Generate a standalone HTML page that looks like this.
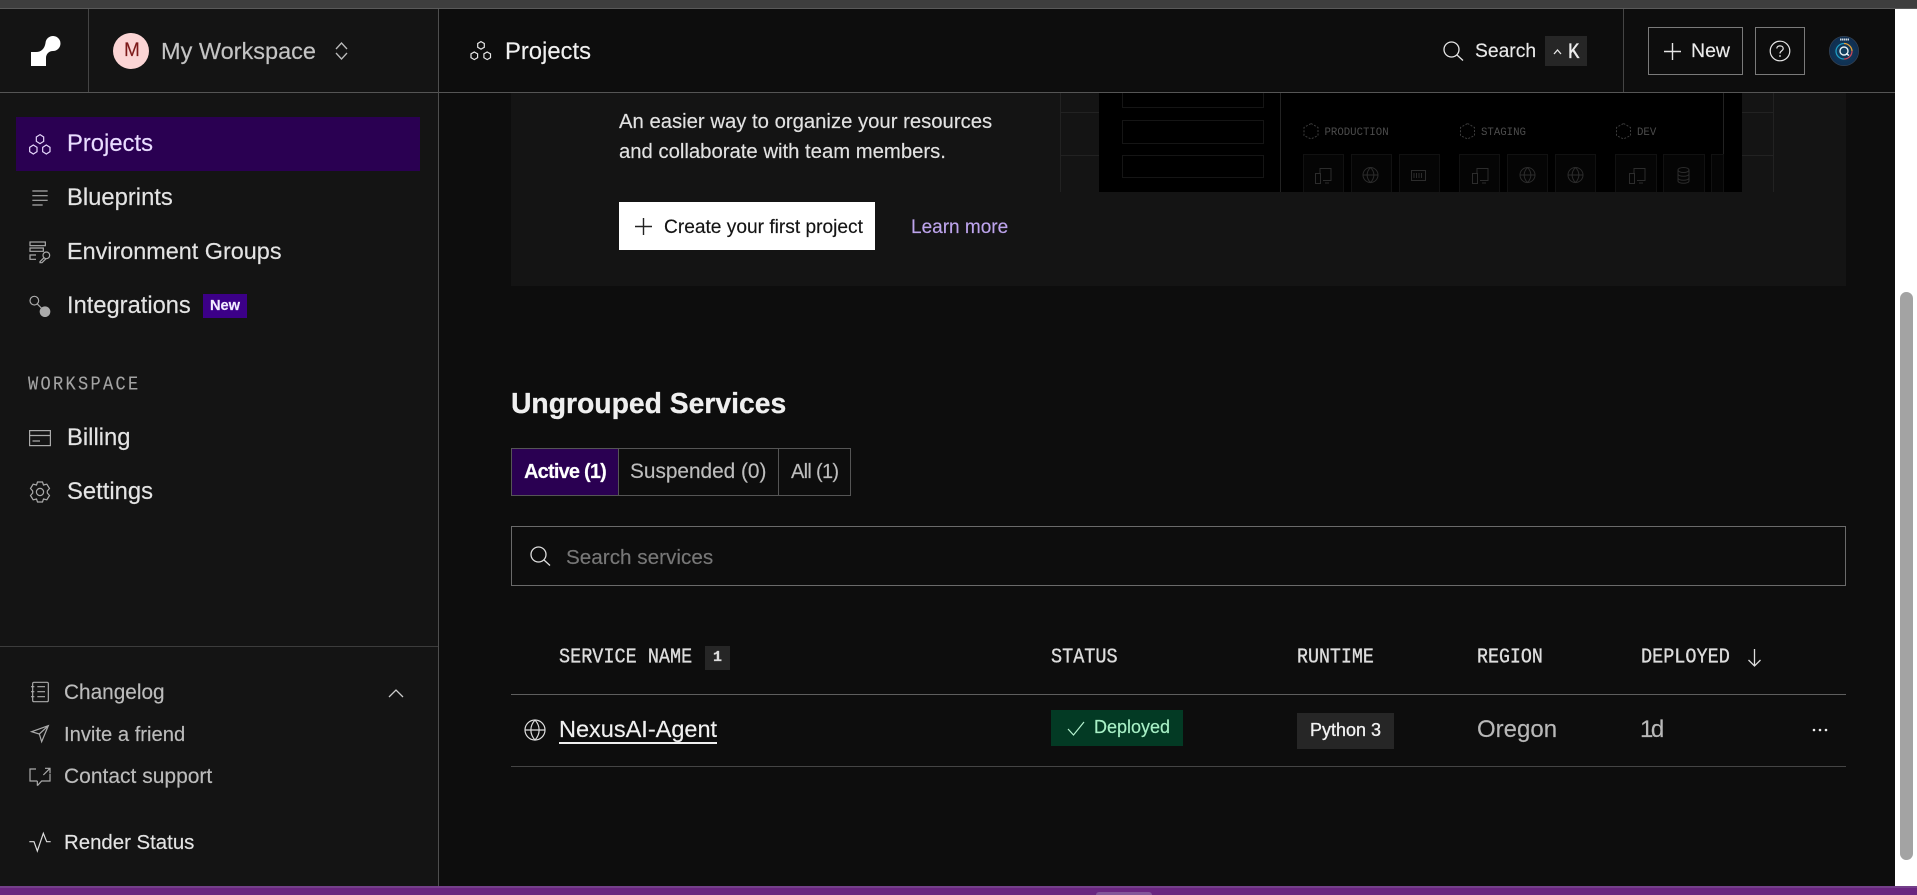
<!DOCTYPE html>
<html lang="en"><head><meta charset="utf-8"><title>Render Dashboard</title>
<style>
html,body{margin:0;padding:0;width:1917px;height:895px;overflow:hidden;background:#fff;font-family:"Liberation Sans",sans-serif}
.a{position:absolute}
.t{position:absolute;white-space:nowrap;line-height:0;height:0;-webkit-text-stroke:.15px currentColor}
.m{font-family:"Liberation Mono",monospace;transform:scaleY(1.16);transform-origin:0 0;-webkit-text-stroke:.3px currentColor}
svg{position:absolute;overflow:visible;fill:none}
a{color:inherit;text-decoration:none}
</style></head>
<body>
<!-- backgrounds -->
<div class="a" style="left:0;top:0;width:1917px;height:8px;background:#3e3e3e"></div>
<div class="a" style="left:0;top:8px;width:1917px;height:1px;background:#5a5a5a"></div>
<div class="a" style="left:0;top:9px;width:438px;height:877px;background:#141414"></div>
<div class="a" style="left:439px;top:9px;width:1456px;height:877px;background:#0d0d0d"></div>
<div class="a" style="left:1900px;top:292px;width:13px;height:568px;background:#a3a3a3;border-radius:7px"></div>
<div class="a" style="left:0;top:886px;width:1917px;height:9px;background:#6a2580"></div>
<div class="a" style="left:0;top:886px;width:1917px;height:2px;background:#74408a"></div>
<div class="a" style="left:1096px;top:892px;width:56px;height:3px;background:#84559a;border-radius:3px 3px 0 0"></div>

<!-- card -->
<div class="a" style="left:511px;top:93px;width:1335px;height:193px;background:#141414"></div>
<svg style="left:0;top:0" width="1917" height="895" viewBox="0 0 1917 895">
  <g stroke="#222" stroke-width="1">
    <path d="M1060.5 93V192M1773.5 93V192M1060 112.500H1099M1060 155.500H1099M1742 112.500H1773M1742 155.500H1773"/>
  </g>
  <rect x="1099" y="93" width="643" height="99" fill="#000"/>
  <g stroke="#151515">
    <path d="M1122.500 93V107.500H1263.500V93"/>
    <rect x="1122.500" y="120.500" width="141" height="23"/>
    <rect x="1122.500" y="155.500" width="141" height="22"/>
  </g>
  <path d="M1280.500 93V192M1723.500 93V192" stroke="#222"/>
  <g fill="#050505" stroke="#111">
    <rect x="1303.500" y="154.500" width="40" height="50"/><rect x="1351.500" y="154.500" width="40" height="50"/><rect x="1399.500" y="154.500" width="40" height="50"/>
    <rect x="1459.500" y="154.500" width="40" height="50"/><rect x="1507.500" y="154.500" width="40" height="50"/><rect x="1555.500" y="154.500" width="40" height="50"/>
    <rect x="1615.500" y="154.500" width="41" height="50"/><rect x="1663.500" y="154.500" width="41" height="50"/><rect x="1711.500" y="154.500" width="12" height="50"/>
  </g>
  <g stroke="#3c3c3c" stroke-dasharray="2 1.500">
    <path d="M1311 123.500L1318 127.500V135.500L1311 139L1304 135.500V127.500Z"/>
    <path d="M1467.500 123.500L1474.500 127.500V135.500L1467.500 139L1460.500 135.500V127.500Z"/>
    <path d="M1623.500 123.500L1630.500 127.500V135.500L1623.500 139L1616.500 135.500V127.500Z"/>
  </g>
  <g font-family="Liberation Mono, monospace" font-size="10.700" fill="#4c4c4c">
    <text x="1324.500" y="135">PRODUCTION</text><text x="1481" y="135">STAGING</text><text x="1637" y="135">DEV</text>
  </g>
  <g stroke="#2c2c2c" stroke-width="1">
    <path d="M1320 174V168.500H1331V180.500H1323M1325 183H1329"/><rect x="1315.500" y="173.500" width="5" height="10"/>
    <circle cx="1370.500" cy="175" r="7.500"/><path d="M1363 175H1378M1370.500 167.500C1366 172 1366 178 1370.500 182.500C1375 178 1375 172 1370.500 167.500"/>
    <rect x="1411.500" y="170.500" width="14" height="10"/><path d="M1414 173V178M1416.500 173V178M1419 173V178M1421.500 173V178" />
    <path d="M1477 174V168.500H1488V180.500H1480M1482 183H1486"/><rect x="1472.500" y="173.500" width="5" height="10"/>
    <circle cx="1527.500" cy="175" r="7.500"/><path d="M1520 175H1535M1527.500 167.500C1523 172 1523 178 1527.500 182.500C1532 178 1532 172 1527.500 167.500"/>
    <circle cx="1575.500" cy="175" r="7.500"/><path d="M1568 175H1583M1575.500 167.500C1571 172 1571 178 1575.500 182.500C1580 178 1580 172 1575.500 167.500"/>
    <path d="M1634 174V168.500H1645V180.500H1637M1639 183H1643"/><rect x="1629.500" y="173.500" width="5" height="10"/>
    <ellipse cx="1683.500" cy="170" rx="5.500" ry="2.500"/><path d="M1678 170V181C1678 184 1689 184 1689 181V170M1678 174C1678 177 1689 177 1689 174M1678 178C1678 181 1689 181 1689 178"/>
  </g>
  <rect x="1060" y="192" width="720" height="13" fill="#141414"/>
</svg>

<div class="t" style="left:619px;top:122px;font-size:20.300px;color:#e2e2e2">An easier way to organize your resources</div>
<div class="t" style="left:619px;top:152px;font-size:20.300px;color:#e2e2e2">and collaborate with team members.</div>
<div class="a" style="left:619px;top:202px;width:256px;height:48px;background:#fff"></div>
<svg style="left:635px;top:218px" width="17" height="17"><path d="M8.500 0V17M0 8.500H17" stroke="#222" stroke-width="1.400"/></svg>
<div class="t" style="left:664px;top:228px;font-size:19.150px;color:#141414">Create your first project</div>
<a class="t" style="left:911px;top:228px;font-size:19px;color:#bda4ec">Learn more</a>

<!-- top bar -->
<div class="a" style="left:0;top:92px;width:1895px;height:1px;background:#555"></div>
<div class="a" style="left:88px;top:9px;width:1px;height:83px;background:#444"></div>
<div class="a" style="left:438px;top:9px;width:1px;height:877px;background:#4e4e4e"></div>
<div class="a" style="left:1623px;top:9px;width:1px;height:83px;background:#444"></div>
<svg style="left:0;top:0" width="100" height="80"><path d="M31 66V52H36C41 52 44.500 49 45.500 43A7.500 7.500 0 1 1 53 51C49 51 46 54 46 58V66Z" fill="#fff"/></svg>
<div class="a" style="left:113px;top:33px;width:36px;height:36px;border-radius:50%;background:#fbd5d5"></div>
<div class="t" style="left:124px;top:51px;font-size:19px;color:#7d1a1a">M</div>
<div class="t" style="left:161px;top:51px;font-size:23.500px;color:#c4c4c4">My Workspace</div>
<svg style="left:0;top:0" width="400" height="80"><path d="M336 49L341.500 43L347 49M336 53L341.500 59L347 53" stroke="#bbb" stroke-width="1.300"/></svg>
<svg style="left:470px;top:41px" width="22" height="20" viewBox="0 0 22 20"><g stroke="#e6e6e6" stroke-width="1.200"><path d="M11 .6L14.300 2.500V6.300L11 8.200L7.700 6.300V2.500Z"/><path d="M4.300 11L7.600 12.900V16.700L4.300 18.600L1 16.700V12.900Z"/><path d="M17.200 11L20.500 12.900V16.700L17.200 18.600L13.900 16.700V12.900Z"/></g></svg>
<div class="t" style="left:505px;top:52px;font-size:23.800px;color:#f0f0f0">Projects</div>

<svg style="left:1443px;top:41px" width="21" height="20" viewBox="0 0 21 20"><circle cx="8.500" cy="8.500" r="7.500" stroke="#e6e6e6" stroke-width="1.300"/><path d="M14 14L20 19.500" stroke="#e6e6e6" stroke-width="1.300"/></svg>
<div class="t" style="left:1475px;top:52px;font-size:19.300px;color:#e8e8e8">Search</div>
<div class="a" style="left:1545px;top:36px;width:42px;height:30px;background:#262626"></div>
<svg style="left:1553px;top:47px" width="10" height="8"><path d="M1 7L4.500 3L8 7" stroke="#e6e6e6" stroke-width="1.300"/></svg>
<div class="t m" style="left:1568px;top:52px;font-size:19px;color:#eee">K</div>
<div class="a" style="left:1648px;top:27px;width:93px;height:46px;border:1px solid #7a7a7a"></div>
<svg style="left:1664px;top:43px" width="17" height="17"><path d="M8.500 0V17M0 8.500H17" stroke="#e6e6e6" stroke-width="1.400"/></svg>
<div class="t" style="left:1691px;top:51px;font-size:19.500px;color:#ececec">New</div>
<div class="a" style="left:1755px;top:27px;width:48px;height:46px;border:1px solid #7a7a7a"></div>
<svg style="left:1769px;top:40px" width="22" height="22" viewBox="0 0 22 22"><circle cx="11" cy="11" r="9.800" stroke="#e6e6e6" stroke-width="1.200"/><path d="M7.800 8.500C7.800 5 14.200 5 14.200 8.500C14.200 11 11 10.800 11 13.500" stroke="#e6e6e6" stroke-width="1.200"/><circle cx="11" cy="16" r=".9" fill="#e6e6e6"/></svg>
<svg style="left:1829px;top:36px" width="30" height="30" viewBox="0 0 30 30">
  <defs><radialGradient id="av" cx=".5" cy=".55" r=".55"><stop offset="0" stop-color="#123f5e"/><stop offset="1" stop-color="#0f2c4f"/></radialGradient></defs>
  <circle cx="15" cy="15" r="14.700" fill="url(#av)" stroke="#3a4654" stroke-width=".6"/>
  <path d="M11 3.500H20" stroke="#cfd8e0" stroke-width="2" stroke-dasharray="1.500 .5"/>
  <path d="M15 7.500A8 8 0 0 1 23 15" stroke="#e8a23a" stroke-width="1.300"/>
  <path d="M23 15A8 8 0 0 1 15 23" stroke="#c9475a" stroke-width="1.300"/>
  <path d="M15 23A8 8 0 0 1 7 15A8 8 0 0 1 15 7.500" stroke="#1f9cc4" stroke-width="1.300"/>
  <circle cx="15" cy="15" r="4" stroke="#e6f0f5" stroke-width="1.400"/><path d="M17 17.500L20 19.500" stroke="#e6f0f5" stroke-width="1.400"/>
</svg>

<!-- sidebar -->
<div class="a" style="left:16px;top:117px;width:404px;height:54px;background:#2a0052"></div>
<svg style="left:20px;top:125px" width="50" height="200" viewBox="0 0 150 600">
  <g stroke="#e4d4fa" stroke-width="3.600">
    <path d="M60 29L71 36V49L60 56L49 49V36Z"/><path d="M40 60L51 67V80L40 87L29 80V67Z"/><path d="M79 60L90 67V80L79 87L68 80V67Z"/>
  </g>
  <path d="M37 198H83M37 212H83M37 226H83M37 240H68" stroke="#aaa" stroke-width="3.600"/>
  <g stroke="#aaa" stroke-width="3.600">
    <rect x="30" y="351" width="46" height="11"/>
    <path d="M30 369H70V379H30Z"/>
    <path d="M48 390H30V403H48"/>
    <circle cx="79" cy="391" r="10"/><path d="M72 398L60 410V413H66L78 401"/>
    <circle cx="43" cy="527" r="13"/><path d="M52 537L66 551"/>
  </g>
  <circle cx="75" cy="560" r="16" fill="#aaa"/>
</svg>
<div class="t" style="left:67px;top:144px;font-size:23.800px;color:#e9dcff">Projects</div>
<div class="t" style="left:67px;top:198px;font-size:23.800px;color:#e4e4e4">Blueprints</div>
<div class="t" style="left:67px;top:251px;font-size:23.400px;color:#e4e4e4">Environment Groups</div>
<div class="t" style="left:67px;top:306px;font-size:23.700px;color:#e4e4e4">Integrations</div>
<div class="a" style="left:203px;top:294px;width:44px;height:24px;background:#3c0088"></div>
<div class="t" style="left:210px;top:306px;font-size:14.600px;font-weight:700;color:#f2ecff">New</div>
<div class="t m" style="left:28px;top:386px;font-size:17px;letter-spacing:2.300px;color:#a4a4a4;-webkit-text-stroke:.1px #a4a4a4">WORKSPACE</div>

<svg style="left:0;top:0" width="100" height="520" viewBox="0 0 100 520">
  <g stroke="#aaa" stroke-width="1.200">
    <rect x="29.600" y="430.600" width="20.800" height="15"/><path d="M30 435.500H50M32.500 441H40"/>
    <circle cx="40" cy="492" r="3.600"/>
    <path d="M37.500 482L42.500 482L43.500 485L46.800 484.200L49.500 488.500L47.300 491L47.300 493L49.500 495.500L46.800 499.800L43.500 499L42.500 502H37.500L36.500 499L33.200 499.800L30.500 495.500L32.700 493V491L30.500 488.500L33.200 484.200L36.500 485Z"/>
  </g>
</svg>
<div class="t" style="left:67px;top:438px;font-size:23.800px;color:#e4e4e4">Billing</div>
<div class="t" style="left:67px;top:492px;font-size:23.800px;color:#e4e4e4">Settings</div>

<div class="a" style="left:0;top:646px;width:438px;height:1px;background:#3c3c3c"></div>
<svg style="left:20px;top:670px" width="50" height="190" viewBox="0 0 150 570">
  <g stroke="#aaa" stroke-width="3.600">
    <rect x="38" y="37" width="47" height="58" rx="4"/><path d="M33 50H43M33 65H43M33 80H43M52 50H75M52 65H75M52 80H75"/>
    <path d="M35 185L85 167L65 215L58 192ZM58 192L85 167"/>
    <path d="M48 297H30V333H52M52 347L65 333H90V312M70 315L90 295M75 295H90V310M52 333V347"/>
  </g>
  <path d="M28 515H42L52 543L70 490L80 515H92" stroke="#ddd" stroke-width="3.600"/>
</svg>
<div class="t" style="left:64px;top:693px;font-size:20.800px;color:#bcbcbc">Changelog</div>
<svg style="left:388px;top:688px" width="16" height="10"><path d="M1 9L8 2L15 9" stroke="#ccc" stroke-width="1.300"/></svg>
<div class="t" style="left:64px;top:735px;font-size:20.200px;color:#bcbcbc">Invite a friend</div>
<div class="t" style="left:64px;top:777px;font-size:21px;color:#bcbcbc">Contact support</div>
<div class="t" style="left:64px;top:843px;font-size:20.400px;color:#e4e4e4">Render Status</div>

<!-- Ungrouped services -->
<div class="t" style="left:511px;top:403px;font-size:28.300px;font-weight:700;color:#efefef;-webkit-text-stroke:.3px #efefef">Ungrouped Services</div>
<div class="a" style="left:511px;top:448px;width:338px;height:46px;border:1px solid #555"></div>
<div class="a" style="left:512px;top:449px;width:106px;height:46px;background:#2a0052"></div>
<div class="a" style="left:618px;top:449px;width:1px;height:46px;background:#555"></div>
<div class="a" style="left:778px;top:449px;width:1px;height:46px;background:#555"></div>
<div class="t" style="left:524px;top:472px;font-size:20px;font-weight:700;letter-spacing:-.8px;color:#fff">Active (1)</div>
<div class="t" style="left:630px;top:472px;font-size:20.800px;color:#bdbdbd">Suspended (0)</div>
<div class="t" style="left:791px;top:472px;font-size:20px;letter-spacing:-.7px;color:#bdbdbd">All (1)</div>

<div class="a" style="left:511px;top:526px;width:1333px;height:58px;border:1px solid #6a6a6a"></div>
<svg style="left:530px;top:546px" width="21" height="20" viewBox="0 0 21 20"><circle cx="8.500" cy="8.500" r="7.500" stroke="#ddd" stroke-width="1.300"/><path d="M14 14L20 19.500" stroke="#ddd" stroke-width="1.300"/></svg>
<div class="t" style="left:566px;top:558px;font-size:20.700px;color:#777">Search services</div>

<div class="t m" style="left:559px;top:658px;font-size:18.500px;color:#ddd">SERVICE NAME</div>
<div class="a" style="left:705px;top:646px;width:25px;height:24px;background:#262626"></div>
<div class="t m" style="left:713px;top:658px;font-size:15px;font-weight:700;color:#ddd;transform:none">1</div>
<div class="t m" style="left:1051px;top:658px;font-size:18.500px;color:#ddd">STATUS</div>
<div class="t m" style="left:1297px;top:658px;font-size:18.300px;color:#ddd">RUNTIME</div>
<div class="t m" style="left:1477px;top:658px;font-size:18.300px;color:#ddd">REGION</div>
<div class="t m" style="left:1641px;top:658px;font-size:18.500px;color:#ddd">DEPLOYED</div>
<svg style="left:1747px;top:648px" width="15" height="19"><path d="M7.500 1V18M1.500 12L7.500 18L13.500 12" stroke="#ddd" stroke-width="1.300"/></svg>

<div class="a" style="left:511px;top:694px;width:1335px;height:1px;background:#5e5e5e"></div>
<div class="a" style="left:511px;top:766px;width:1335px;height:1px;background:#444"></div>

<svg style="left:524px;top:719px" width="22" height="22" viewBox="0 0 22 22"><g stroke="#ddd" stroke-width="1.200"><circle cx="11" cy="11" r="10"/><path d="M1 11H21M11 1C5.500 7 5.500 15 11 21C16.500 15 16.500 7 11 1"/></g></svg>
<div class="t" style="left:559px;top:729px;font-size:23.500px;color:#f0f0f0">NexusAI-Agent</div>
<div class="a" style="left:559px;top:742px;width:158px;height:2px;background:#f0f0f0"></div>

<div class="a" style="left:1051px;top:710px;width:132px;height:36px;background:#033a24"></div>
<svg style="left:1067px;top:721px" width="18" height="15"><path d="M1 8L6.500 14L17 1" stroke="#b5f2cf" stroke-width="1.200"/></svg>
<div class="t" style="left:1094px;top:727px;font-size:18px;color:#a8f0c6">Deployed</div>
<div class="a" style="left:1297px;top:713px;width:97px;height:36px;background:#262626"></div>
<div class="t" style="left:1310px;top:730px;font-size:18px;color:#f2f2f2;-webkit-text-stroke:.3px #f2f2f2">Python 3</div>
<div class="t" style="left:1477px;top:730px;font-size:24px;color:#b8b8b8">Oregon</div>
<div class="t" style="left:1640px;top:730px;font-size:24px;letter-spacing:-2.500px;color:#b8b8b8">1d</div>
<svg style="left:1812px;top:728px" width="16" height="4"><circle cx="2" cy="2" r="1.300" fill="#eee"/><circle cx="8" cy="2" r="1.300" fill="#eee"/><circle cx="14" cy="2" r="1.300" fill="#eee"/></svg>
</body></html>
